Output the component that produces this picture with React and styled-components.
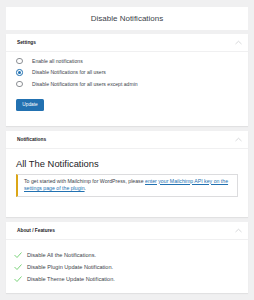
import React, { useState } from 'react';
import styled, { createGlobalStyle } from 'styled-components';

const GlobalStyle = createGlobalStyle`
  html, body {
    margin: 0;
    padding: 0;
    background: #f0f0f1;
    font-family: "Liberation Sans", Arial, sans-serif;
    color: #3c434a;
  }
`;

const Page = styled.div`
  display: flex;
  flex-direction: column;
  gap: 4px;
  padding: 7px 6px 6px 6px;
  width: 242px;
`;

const TitleCard = styled.div`
  background: #fff;
  height: 23px;
  display: flex;
  align-items: center;
  justify-content: center;
  font-size: 8px;
  color: #3c434a;
`;

const Card = styled.div`
  background: #fff;
  box-shadow: 0 1px 1px rgba(0, 0, 0, 0.06);
  margin-bottom: 1px;
`;

const CardHeader = styled.div`
  height: 17px;
  display: flex;
  align-items: center;
  justify-content: space-between;
  padding: 0 6px 0 11px;
  border-bottom: 1px solid #f0f0f1;
  font-size: 4.8px;
  font-weight: bold;
  color: #1d2327;
`;

const Chevron = styled.svg`
  width: 7px;
  height: 5px;
`;

const CardBody = styled.div`
  padding: ${({ $pad }) => $pad};
`;

const RadioRow = styled.label`
  display: flex;
  align-items: center;
  height: 11.5px;
  font-size: 5.1px;
  color: #3c434a;
`;

const Radio = styled.span`
  box-sizing: border-box;
  width: 6.5px;
  height: 6.5px;
  border-radius: 50%;
  border: 0.8px solid ${({ $on }) => ($on ? '#2271b1' : '#8c8f94')};
  display: flex;
  align-items: center;
  justify-content: center;
  margin: 0 9.5px 0 0;
  &::after {
    content: '';
    width: 3px;
    height: 3px;
    border-radius: 50%;
    background: ${({ $on }) => ($on ? '#2271b1' : 'transparent')};
  }
`;

const Button = styled.button`
  margin-top: 9px;
  background: #2271b1;
  color: #fff;
  border: none;
  border-radius: 1.5px;
  font-family: inherit;
  font-size: 4.8px;
  width: 28px;
  height: 12px;
  padding: 0;
`;

const BigTitle = styled.h2`
  margin: 0;
  font-weight: normal;
  font-size: 9.4px;
  color: #1d2327;
  line-height: 11px;
`;

const Notice = styled.div`
  margin-top: 5px;
  border: 0.7px solid #dcdcde;
  border-left: 2px solid #dba617;
  padding: 3px 6px 3px 6px;
  font-size: 5.2px;
  line-height: 7.5px;
  color: #3c434a;
`;

const NoticeLink = styled.a`
  color: #2271b1;
  text-decoration: underline;
`;

const FeatureRow = styled.div`
  display: flex;
  align-items: center;
  height: 12px;
  font-size: 5.6px;
  color: #3c434a;
  gap: 5px;
`;

const Check = styled.svg`
  width: 8px;
  height: 6px;
`;

function Up() {
  return (
    <Chevron viewBox="0 0 14 8">
      <path d="M1 7 L7 1.5 L13 7" fill="none" stroke="#c3c4c7" strokeWidth="1.3" />
    </Chevron>
  );
}

function Tick() {
  return (
    <Check viewBox="0 0 16 12">
      <path d="M1 6 L6 11 L15 1" fill="none" stroke="#5bc85b" strokeWidth="1.6" />
    </Check>
  );
}

const options = [
  'Enable all notifications',
  'Disable Notifications for all users',
  'Disable Notifications for all users except admin',
];

const features = [
  'Disable All the Notifications.',
  'Disable Plugin Update Notification.',
  'Disable Theme Update Notification.',
];

export default function App() {
  const [selected, setSelected] = useState(1);
  return (
    <>
      <GlobalStyle />
      <Page>
        <TitleCard>Disable Notifications</TitleCard>
        <Card>
          <CardHeader>
            Settings
            <Up />
          </CardHeader>
          <CardBody $pad="3px 16px 15px 10px">
            {options.map((o, i) => (
              <RadioRow key={o} onClick={() => setSelected(i)}>
                <Radio $on={selected === i} />
                {o}
              </RadioRow>
            ))}
            <Button>Update</Button>
          </CardBody>
        </Card>
        <Card>
          <CardHeader>
            Notifications
            <Up />
          </CardHeader>
          <CardBody $pad="9px 10px 20px 10px">
            <BigTitle>All The Notifications</BigTitle>
            <Notice>
              To get started with Mailchimp for WordPress, please{' '}
              <NoticeLink>enter your Mailchimp API key on the settings page of the plugin</NoticeLink>.
            </Notice>
          </CardBody>
        </Card>
        <Card>
          <CardHeader>
            About / Features
            <Up />
          </CardHeader>
          <CardBody $pad="9px 12px 8px 8px">
            {features.map((f) => (
              <FeatureRow key={f}>
                <Tick />
                {f}
              </FeatureRow>
            ))}
          </CardBody>
        </Card>
      </Page>
    </>
  );
}
